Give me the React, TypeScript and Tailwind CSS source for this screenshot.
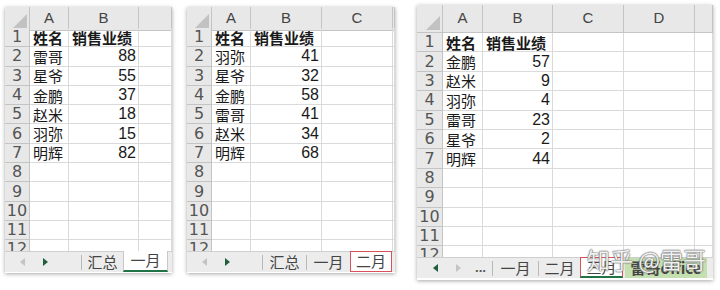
import React from "react";

type Row = [string, string];

const sheet1: Row[] = [
  ["雷哥", "88"],
  ["星爷", "55"],
  ["金鹏", "37"],
  ["赵米", "18"],
  ["羽弥", "15"],
  ["明辉", "82"],
];
const sheet2: Row[] = [
  ["羽弥", "41"],
  ["星爷", "32"],
  ["金鹏", "58"],
  ["雷哥", "41"],
  ["赵米", "34"],
  ["明辉", "68"],
];
const sheet3: Row[] = [
  ["金鹏", "57"],
  ["赵米", "9"],
  ["羽弥", "4"],
  ["雷哥", "23"],
  ["星爷", "2"],
  ["明辉", "44"],
];

const cjk = "font-['Noto_Sans_CJK_SC','Noto_Sans_CJK_JP',sans-serif]";
const num = "font-['Liberation_Sans',Arial,sans-serif]";
const rowNum = "font-['DejaVu_Sans',sans-serif]";

function Corner() {
  return (
    <div className="flex items-end justify-end bg-[#e8e8e8] border-r border-b border-[#c4c4c4] pr-[2px] pb-[2px]">
      <svg width="14" height="14" viewBox="0 0 14 14">
        <path d="M14 0 L14 14 L0 14 Z" fill="#c2c2c2" />
      </svg>
    </div>
  );
}

function Grid({
  cols,
  extra,
  data,
  rowClass,
  headClass,
}: {
  cols: string;
  extra: string[];
  data: Row[];
  rowClass: string;
  headClass: string;
}) {
  const letters = ["A", "B", ...extra];
  const rows: Row[] = [["姓名", "销售业绩"], ...data];
  for (let i = rows.length; i < 12; i++) rows.push(["", ""]);
  return (
    <div className="flex-1 overflow-hidden">
      <div className={`grid ${cols} ${headClass}`}>
        <Corner />
        {letters.map((l, i) => (
          <div
            key={i}
            className={`flex items-center justify-center bg-[#e8e8e8] border-r border-b border-[#c4c4c4] text-[15px] text-[#444] ${num}`}
          >
            {l === "-" ? "" : l}
          </div>
        ))}
      </div>
      {rows.map((r, i) => (
        <div key={i} className={`grid ${cols} ${rowClass}`}>
          <div
            className={`flex items-center justify-center bg-[#e8e8e8] border-r border-b border-[#c4c4c4] text-[16px] leading-none text-[#555] ${rowNum}`}
          >
            {i + 1}
          </div>
          <div
            className={`flex items-center pl-[3px] border-r border-b border-[#dadada] text-[15px] leading-none text-[#1a1a1a] whitespace-nowrap ${cjk} ${i === 0 ? "font-bold" : ""}`}
          >
            {r[0]}
          </div>
          <div
            className={`flex items-center border-r border-b border-[#dadada] leading-none whitespace-nowrap ${
              i === 0
                ? `pl-[3px] text-[15px] font-bold text-[#1a1a1a] ${cjk}`
                : `justify-end pr-[2px] text-[16px] text-[#1a1a1a] ${num}`
            }`}
          >
            {r[1]}
          </div>
          {extra.map((_, j) => (
            <div key={j} className="border-r border-b border-[#dadada]" />
          ))}
        </div>
      ))}
    </div>
  );
}

function Arrow({ dir, on }: { dir: "l" | "r"; on: boolean }) {
  return (
    <svg width="5" height="8" viewBox="0 0 5 8">
      <path
        d={dir === "l" ? "M5 0 L0 4 L5 8 Z" : "M0 0 L5 4 L0 8 Z"}
        fill={on ? "#1f5f3b" : "#c4c4c4"}
      />
    </svg>
  );
}

function Sep() {
  return <div className="w-px h-[15px] bg-[#b9b9b9]" />;
}

function TabText({ children, className }: { children: React.ReactNode; className: string }) {
  return (
    <div className={`flex items-center justify-center text-[15px] text-[#444] ${cjk} ${className}`}>
      {children}
    </div>
  );
}

export default function App() {
  return (
    <div className="w-[720px] h-[290px] bg-white flex items-start overflow-hidden">
      {/* sheet 一月 */}
      <div className="ml-[5px] mt-[7px] w-[167px] h-[266px] bg-white flex flex-col shadow-[0_1px_4px_rgba(0,0,0,0.35)]">
        <Grid
          cols="grid-cols-[25px_39px_70px_33px]"
          extra={["-"]}
          data={sheet1}
          rowClass="h-[19.3px]"
          headClass="h-[21px]"
        />
        <div className="h-[21px] shrink-0 bg-[#ececec] border-t border-[#cfcfcf] flex items-stretch mb-[1px]">
          <div className="w-[29px] pl-[6px] flex items-center justify-center">
            <Arrow dir="l" on={false} />
          </div>
          <div className="w-[22px] flex items-center justify-center">
            <Arrow dir="r" on={true} />
          </div>
          <div className="w-[25px]" />
          <div className="flex items-center">
            <Sep />
          </div>
          <TabText className="w-[41px]">汇总</TabText>
          <TabText className="w-[45px] bg-white border-x border-[#c8c8c8] border-b-2 border-b-[#217346] -mt-px">
            一月
          </TabText>
        </div>
      </div>

      {/* sheet 二月 */}
      <div className="ml-[15px] mt-[7px] w-[208px] h-[266px] bg-white flex flex-col shadow-[0_1px_4px_rgba(0,0,0,0.35)]">
        <Grid
          cols="grid-cols-[25px_39px_71px_71px_2px]"
          extra={["C", "-"]}
          data={sheet2}
          rowClass="h-[19.3px]"
          headClass="h-[21px]"
        />
        <div className="h-[21px] shrink-0 bg-[#ececec] border-t border-[#cfcfcf] flex items-stretch mb-[1px]">
          <div className="w-[29px] pl-[6px] flex items-center justify-center">
            <Arrow dir="l" on={false} />
          </div>
          <div className="w-[22px] flex items-center justify-center">
            <Arrow dir="r" on={true} />
          </div>
          <div className="w-[24px]" />
          <div className="flex items-center">
            <Sep />
          </div>
          <TabText className="w-[43px]">汇总</TabText>
          <div className="flex items-center">
            <Sep />
          </div>
          <TabText className="w-[43px]">一月</TabText>
          <TabText className="w-[42px] bg-white border border-[#d9515a] -mt-px">二月</TabText>
        </div>
      </div>

      {/* sheet 三月 */}
      <div className="relative ml-[22px] mt-[5px] w-[296px] h-[275px] bg-white flex flex-col shadow-[0_1px_4px_rgba(0,0,0,0.35)]">
        <Grid
          cols="grid-cols-[26px_40px_70px_71px_71px_18px]"
          extra={["C", "D", "-"]}
          data={sheet3}
          rowClass="h-[19.4px]"
          headClass="h-[28px]"
        />
        <div className="h-[21px] shrink-0 bg-[#ececec] border-t border-[#cfcfcf] flex items-stretch mb-[2px]">
          <div className="w-[30px] pl-[6px] flex items-center justify-center">
            <Arrow dir="l" on={true} />
          </div>
          <div className="w-[22px] flex items-center justify-center">
            <Arrow dir="r" on={false} />
          </div>
          <div className="w-[23px] flex items-center justify-center text-[13px] font-bold text-[#555] leading-none pb-[2px]">
            ...
          </div>
          <div className="flex items-center">
            <Sep />
          </div>
          <TabText className="w-[45px]">一月</TabText>
          <div className="flex items-center">
            <Sep />
          </div>
          <TabText className="w-[41px]">二月</TabText>
          <TabText className="w-[43px] bg-white border border-[#d9515a] border-b-2 border-b-[#217346] -mt-px">
            三月
          </TabText>
          <TabText className="w-[82px] ml-[2px] bg-[#c4dfb0] font-bold text-[#1b1b1b]">
            雷哥office
          </TabText>
        </div>
        <div
          className={`absolute left-[170px] top-[243px] text-[23px] leading-none whitespace-nowrap text-white/90 ${cjk} [text-shadow:0_0_1px_#666,0_0_1px_#666,0_0_2px_#777]`}
        >
          知乎 @雷哥
        </div>
      </div>
    </div>
  );
}
